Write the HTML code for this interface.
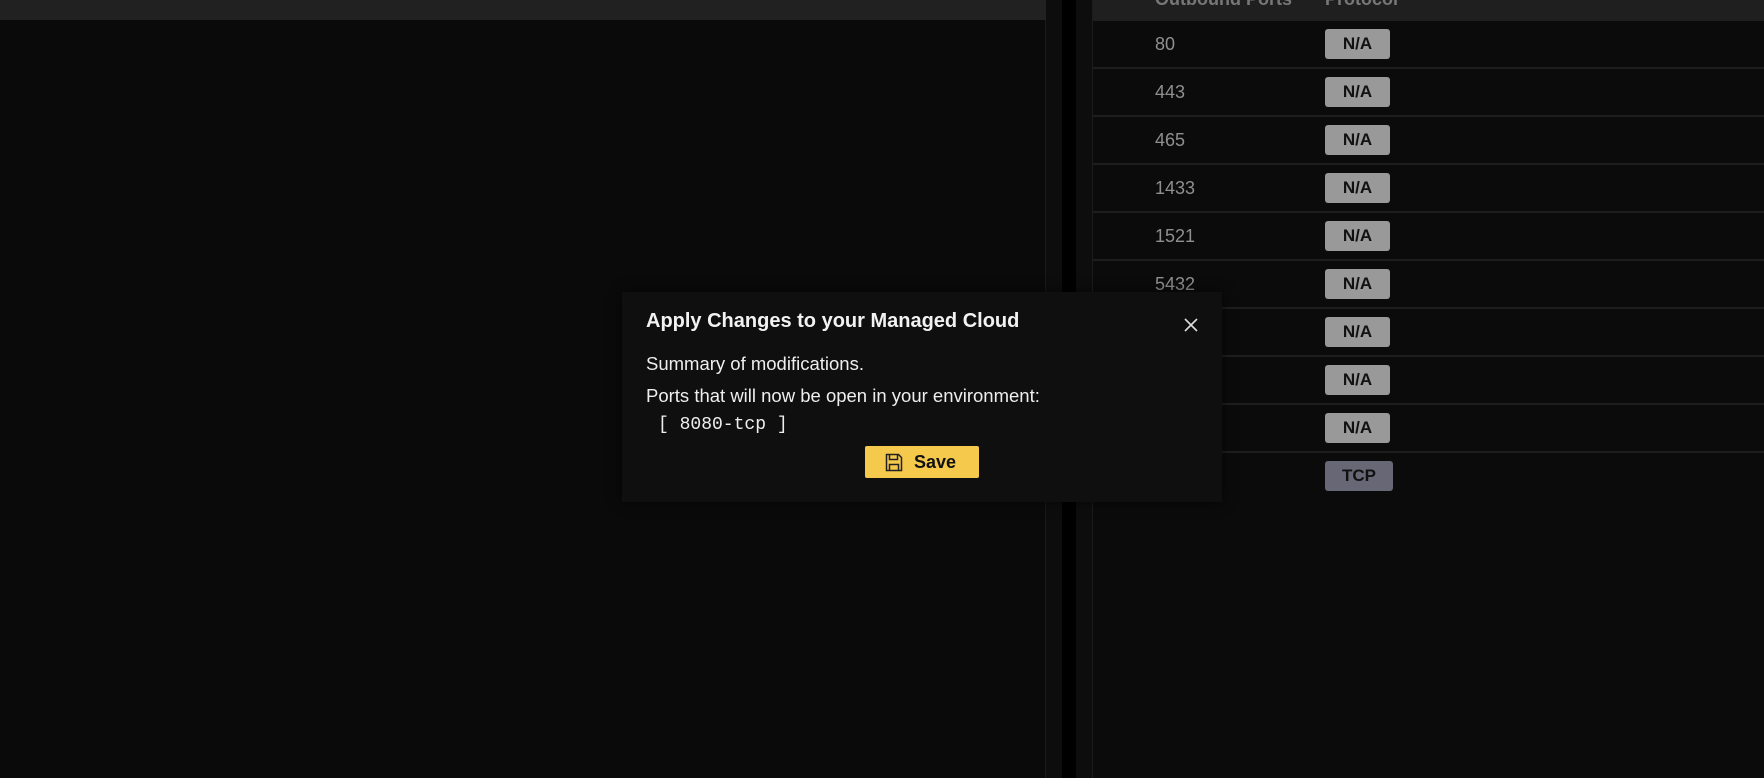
<!DOCTYPE html>
<html><head><style>
body{margin:0;width:1764px;height:778px;background:#0a0a0a;position:relative;overflow:hidden;font-family:"Liberation Sans",sans-serif}
.abs{position:absolute}
.row{position:absolute;left:1093px;right:0;height:48px;border-bottom:2px solid #1e1e1e;box-sizing:border-box}
.port{position:absolute;left:62px;top:13px;color:#8f8f8f;font-size:18px}
.badge{position:absolute;left:232px;top:8px;width:65px;height:30px;border-radius:3px;background:#999;color:#111;font-weight:bold;font-size:17px;text-align:center;line-height:30px}
</style></head><body>
<div class="abs" style="left:0;top:0;width:1046px;height:20px;background:#212121"></div>
<div class="abs" style="left:1045px;top:20px;width:1px;height:758px;background:#1a1a1a"></div>
<div class="abs" style="left:1046px;top:0;width:16px;height:778px;background:#0d0d0d"></div>
<div class="abs" style="left:1062px;top:0;width:14px;height:778px;background:#000"></div>
<div class="abs" style="left:1076px;top:0;width:16px;height:778px;background:#0d0d0d"></div>
<div class="abs" style="left:1092px;top:0;width:1px;height:778px;background:#1c1c1c"></div>
<div class="abs" style="left:1093px;top:0;right:0;height:21px;background:#1f1f1f;overflow:hidden">
 <span class="abs" style="left:62px;top:-11px;color:#777;font-size:18px;font-weight:bold">Outbound Ports</span>
 <span class="abs" style="left:232px;top:-11px;color:#777;font-size:18px;font-weight:bold">Protocol</span>
</div>
<div class="abs" style="left:1093px;top:21px;right:0;bottom:0;background:#0b0b0b"></div>
<div class="row" style="top:21px"><span class="port">80</span><span class="badge">N/A</span></div>
<div class="row" style="top:69px"><span class="port">443</span><span class="badge">N/A</span></div>
<div class="row" style="top:117px"><span class="port">465</span><span class="badge">N/A</span></div>
<div class="row" style="top:165px"><span class="port">1433</span><span class="badge">N/A</span></div>
<div class="row" style="top:213px"><span class="port">1521</span><span class="badge">N/A</span></div>
<div class="row" style="top:261px"><span class="port">5432</span><span class="badge">N/A</span></div>
<div class="row" style="top:309px"><span class="port">5672</span><span class="badge">N/A</span></div>
<div class="row" style="top:357px"><span class="port">6379</span><span class="badge">N/A</span></div>
<div class="row" style="top:405px"><span class="port">8080</span><span class="badge">N/A</span></div>
<div class="row" style="top:453px;border:none"><span class="port">8080</span><span class="badge" style="background:#676775;width:68px">TCP</span></div>

<div class="abs" style="left:622px;top:292px;width:600px;height:210px;background:#0f0f0f;box-shadow:0 0 12px rgba(0,0,0,.6)">
 <div class="abs" style="left:24px;top:18px;color:#f2f2f2;font-size:20px;font-weight:bold">Apply Changes to your Managed Cloud</div>
 <svg class="abs" style="left:561px;top:25px" width="16" height="16" viewBox="0 0 16 16"><path d="M2 2L14 14M14 2L2 14" stroke="#ddd" stroke-width="1.6"/></svg>
 <div class="abs" style="left:24px;top:61px;color:#eee;font-size:18.5px">Summary of modifications.</div>
 <div class="abs" style="left:24px;top:93px;color:#eee;font-size:18.5px">Ports that will now be open in your environment:</div>
 <div class="abs" style="left:36px;top:123px;color:#eee;font-size:18px;font-family:'Liberation Mono','DejaVu Sans Mono',monospace">[ 8080-tcp ]</div>
 <div class="abs" style="left:243px;top:154px;width:114px;height:32px;background:#f5c94c;border-radius:2px">
  <svg class="abs" style="left:20px;top:7px" width="18" height="19" viewBox="0 0 18 19"><path d="M1.5 1.5h12l3 3v13h-15z M4.5 1.5v5h8v-5 M4.5 17.5v-6h9v6" fill="none" stroke="#222" stroke-width="1.5"/></svg>
  <span class="abs" style="left:49px;top:6px;font-size:18px;font-weight:bold;color:#111">Save</span>
 </div>
</div>
</body></html>
